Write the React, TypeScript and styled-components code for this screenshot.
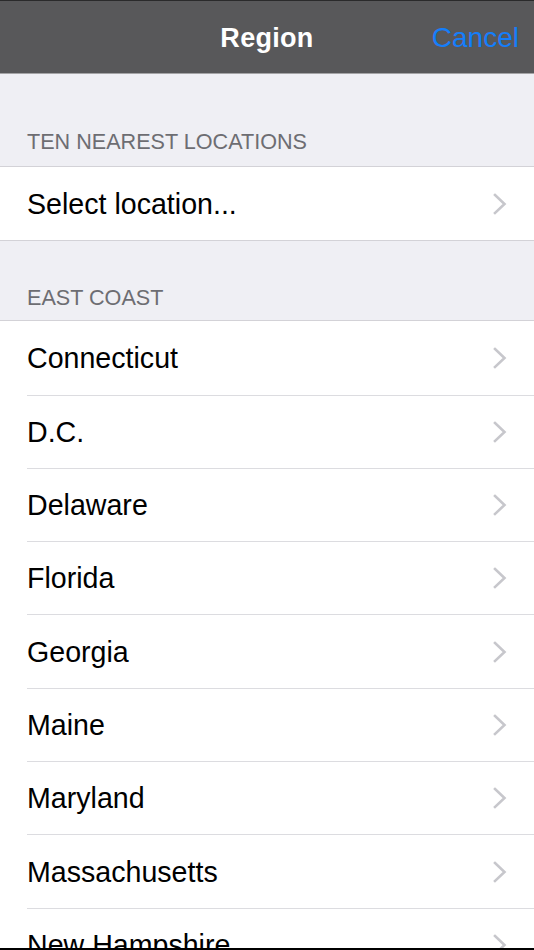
import { createGlobalStyle } from 'styled-components'
import styled from 'styled-components'

const GlobalStyle = createGlobalStyle`
  html, body {
    margin: 0;
    padding: 0;
    background: #000;
  }
  body {
    font-family: 'Liberation Sans', Arial, sans-serif;
    -webkit-font-smoothing: antialiased;
  }
`

const Screen = styled.div`
  width: 534px;
  height: 950px;
  box-sizing: border-box;
  border-bottom: 2px solid #000;
  background: #efeff4;
  overflow: hidden;
  display: flex;
  flex-direction: column;
`

const NavBar = styled.header`
  flex: none;
  height: 74px;
  box-sizing: border-box;
  border-top: 1px solid #2a2a2b;
  border-bottom: 1px solid #a4a4a6;
  background: #58585a;
  display: grid;
  grid-template-columns: 1fr auto 1fr;
  align-items: center;
  padding: 2px 15px 0;
`

const Title = styled.h1`
  grid-column: 2;
  margin: 0;
  font-size: 27px;
  font-weight: 700;
  color: #fff;
  letter-spacing: 0.3px;
`

const NavButton = styled.button`
  grid-column: 3;
  justify-self: end;
  border: 0;
  padding: 0;
  background: none;
  font-family: inherit;
  font-size: 28px;
  color: #147efb;
`

const SectionHeader = styled.div<{ height: number; gap: number }>`
  flex: none;
  height: ${({ height }) => height}px;
  box-sizing: border-box;
  display: flex;
  align-items: flex-end;
  padding: 0 26px ${({ gap }) => gap}px 27px;
  font-size: 21.6px;
  line-height: 1;
  color: #6d6d72;
  text-transform: uppercase;
`

const Group = styled.ul`
  flex: none;
  margin: 0;
  padding: 0;
  list-style: none;
  background: #fff;
  border-top: 1px solid #d3d2d7;
  border-bottom: 1px solid #d3d2d7;
`

const Row = styled.li`
  height: 73.3px;
  box-sizing: border-box;
  margin-left: 27px;
  padding-right: 27px;
  display: flex;
  align-items: center;
  justify-content: space-between;
  font-size: 28.6px;
  color: #000;

  & + & {
    border-top: 1px solid #dcdce0;
  }
`

const Label = styled.span`
  padding-top: 1px;
`

function Chevron() {
  return (
    <svg width="14" height="22" viewBox="0 0 14 22" aria-hidden>
      <path
        d="M2 2 L11.5 11 L2 20"
        fill="none"
        stroke="#c7c7cc"
        strokeWidth="2.6"
        strokeLinecap="square"
      />
    </svg>
  )
}

const eastCoast = [
  'Connecticut',
  'D.C.',
  'Delaware',
  'Florida',
  'Georgia',
  'Maine',
  'Maryland',
  'Massachusetts',
  'New Hampshire',
  'New Jersey',
]

export default function App() {
  return (
    <>
      <GlobalStyle />
      <Screen>
        <NavBar>
          <Title>Region</Title>
          <NavButton type="button">Cancel</NavButton>
        </NavBar>

        <SectionHeader height={92} gap={13}>
          Ten nearest locations
        </SectionHeader>
        <Group>
          <Row>
            <Label>Select location...</Label>
            <Chevron />
          </Row>
        </Group>

        <SectionHeader height={79} gap={12}>
          East coast
        </SectionHeader>
        <Group>
          {eastCoast.map((name) => (
            <Row key={name}>
              <Label>{name}</Label>
              <Chevron />
            </Row>
          ))}
        </Group>
      </Screen>
    </>
  )
}
